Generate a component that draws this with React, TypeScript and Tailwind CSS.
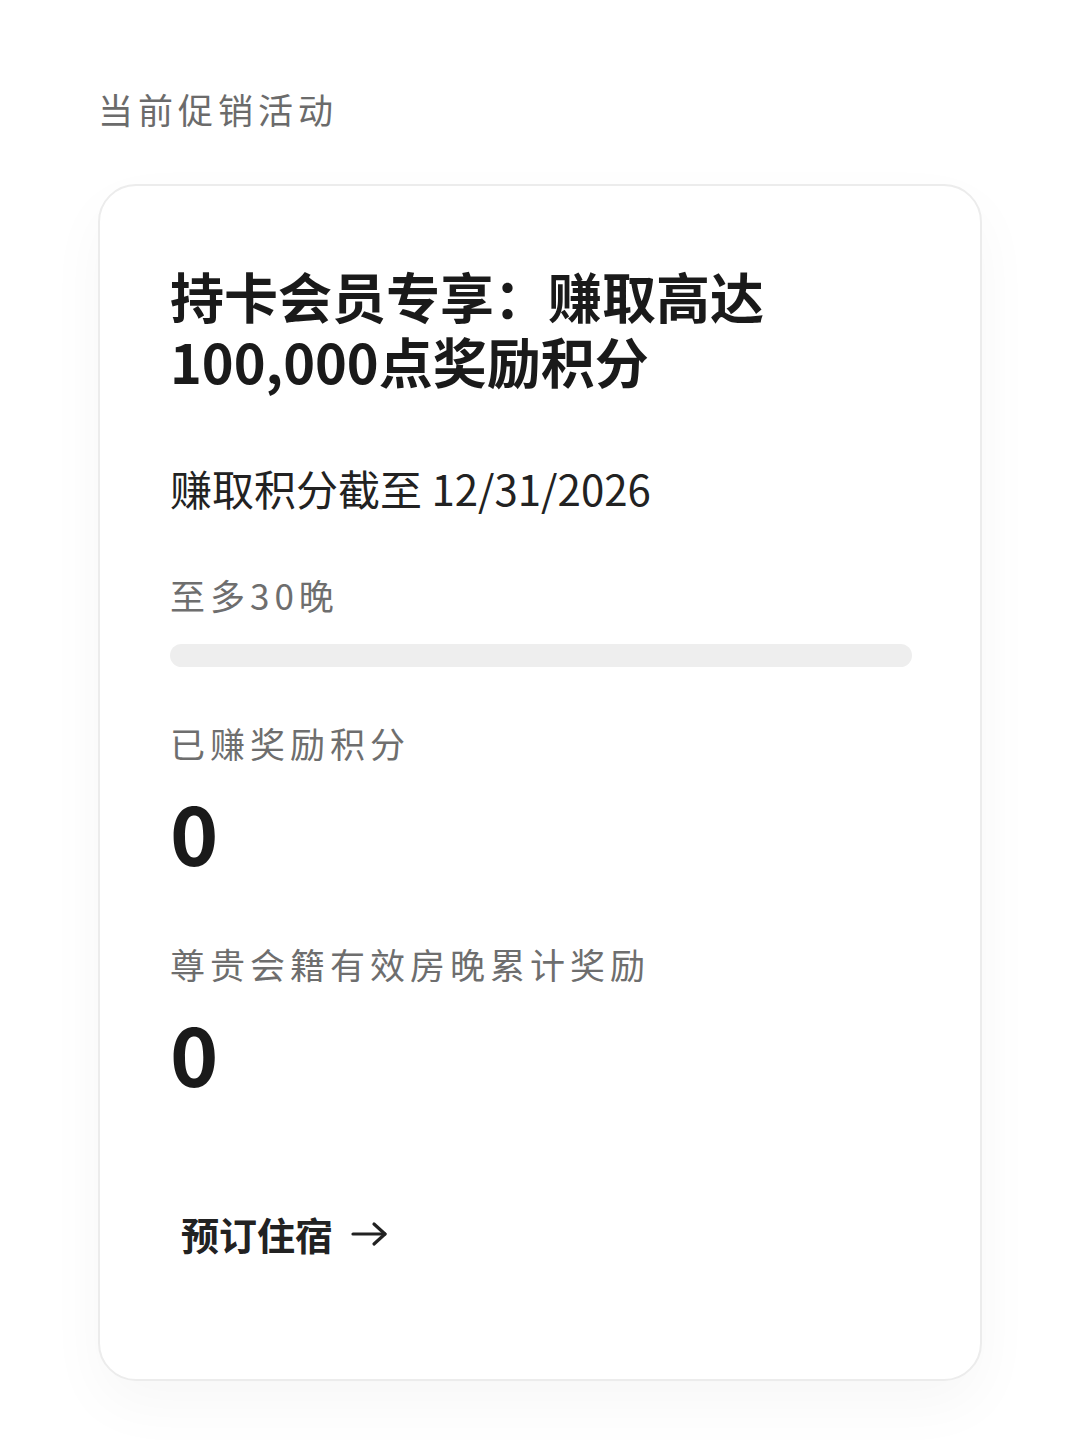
export default function App() {
  const font = { fontFamily: '"Noto Sans CJK SC", "Noto Sans", sans-serif' }

  return (
    <div className="min-h-[1440px] bg-white px-[98px] pt-[89px]" style={font}>
      {/* Section heading */}
      <h2 className="text-[35px] leading-[40px] tracking-[5px] text-[#6b6b6b]">当前促销活动</h2>

      {/* Promotion card */}
      <div className="mt-[55px] rounded-[38px] border-2 border-[#ececec] bg-white pl-[70px] pr-[68px] pt-[77px] pb-[122px] shadow-[0_24px_60px_rgba(0,0,0,0.035)]">
        <h1 className="text-[54px] font-bold leading-[65px] text-[#1a1a1a]">
          持卡会员专享：赚取高达
          <br />
          100,000点奖励积分
        </h1>

        <p className="mt-[71px] text-[42px] leading-[48px] text-[#222222]">赚取积分截至 12/31/2026</p>

        <p className="mt-[63px] text-[35px] leading-[40px] tracking-[5px] text-[#6e6e6e]">至多30晚</p>
        <div className="mt-[29px] h-[23px] w-full rounded-full bg-[#eeeeee]" />

        <p className="mt-[56px] text-[35px] leading-[40px] tracking-[5px] text-[#6e6e6e]">已赚奖励积分</p>
        <p className="mt-[27px] text-[82px] font-bold leading-none text-[#1a1a1a]">0</p>

        <p className="mt-[72px] text-[35px] leading-[40px] tracking-[5px] text-[#6e6e6e]">尊贵会籍有效房晚累计奖励</p>
        <p className="mt-[27px] text-[82px] font-bold leading-none text-[#1a1a1a]">0</p>

        <button className="mt-[118px] ml-[11px] flex items-center gap-[18px] text-[38px] font-bold leading-[46px] text-[#222222]">
          <span>预订住宿</span>
          <svg width="37" height="26" viewBox="0 0 37 26" fill="none" stroke="#222222" strokeWidth="3.2" strokeLinecap="round" strokeLinejoin="round">
            <path d="M2 13h32" />
            <path d="M23 3l11 10-11 10" />
          </svg>
        </button>
      </div>
    </div>
  )
}
